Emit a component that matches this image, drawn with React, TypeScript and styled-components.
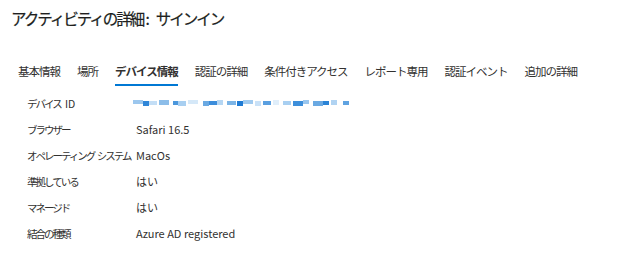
import React from 'react';
import styled, { createGlobalStyle } from 'styled-components';

const GlobalStyle = createGlobalStyle`
  html, body {
    margin: 0;
    padding: 0;
    background: #ffffff;
  }
  body {
    font-family: "Noto Sans CJK JP", "Noto Sans", sans-serif;
    color: #323130;
  }
`;

const SPage = styled.div`
  width: 620px;
  height: 259px;
  padding: 4px 11px 0 11px;
  box-sizing: border-box;
`;

const STitle = styled.h1`
  margin: 0;
  font-size: 15.5px;
  font-weight: 400;
  line-height: 28px;
  color: #201f1e;
  letter-spacing: -2px;
  -webkit-text-stroke: 0.2px #201f1e;
`;

const STitleColon = styled.span`
  letter-spacing: 0;
  margin: 0 6px 0 2px;
`;

const STabs = styled.div`
  display: flex;
  gap: 17px;
  margin-top: 30px;
  padding-left: 7px;
`;

const STab = styled.div<{ $active?: boolean }>`
  font-size: 11.5px;
  line-height: 18px;
  padding-bottom: 4px;
  letter-spacing: -1px;
  color: #323130;
  font-weight: ${(p) => (p.$active ? 700 : 400)};
  border-bottom: 2px solid ${(p) => (p.$active ? '#0078d4' : 'transparent')};
  white-space: nowrap;
`;

const SList = styled.div`
  display: flex;
  flex-direction: column;
  margin-top: 4px;
  padding-left: 16px;
`;

const SRow = styled.div`
  display: grid;
  grid-template-columns: 109px 1fr;
  align-items: center;
  height: 26px;
  color: #323130;
`;

const SLabel = styled.span`
  font-size: 10.5px;
  letter-spacing: -2px;
  word-spacing: 2px;
  white-space: nowrap;
`;

const SLatin = styled.span`
  letter-spacing: 0;
  margin-left: 2px;
`;

const SValue = styled.span`
  font-size: 11px;
  white-space: nowrap;
`;

const blur: [number, number, string][] = [
  [0, 10, '#9cc7ee'], [10, 6, '#2f86d8'], [16, 8, '#c3def6'], [26, 10, '#8cbde9'],
  [40, 5, '#4b97dc'], [45, 8, '#a8cff1'], [55, 10, '#d5e8f8'], [70, 6, '#6aa9e2'],
  [76, 8, '#3b8ddb'], [84, 6, '#b5d6f3'], [94, 9, '#7bb4e6'], [104, 6, '#1f7bd4'],
  [110, 10, '#a0caef'], [122, 6, '#c9e1f7'], [130, 8, '#5a9fe0'], [140, 6, '#e0eefa'],
  [150, 8, '#a8cff1'], [160, 10, '#3d8fdb'], [170, 6, '#9ac6ee'], [180, 10, '#6aa9e2'],
  [190, 6, '#2a84d7'], [198, 6, '#b0d3f2'], [210, 6, '#5fa3e1'],
];

const DeviceId = () => (
  <svg width="216" height="8" viewBox="0 0 216 8" style={{ display: 'block', marginLeft: -3 }}>
    {blur.map(([x, w, c], i) => (
      <rect key={i} x={x} y={i % 3 === 0 ? 1 : 2} width={w} height={i % 2 ? 5 : 4} fill={c} />
    ))}
  </svg>
);

const tabs = ['基本情報', '場所', 'デバイス情報', '認証の詳細', '条件付きアクセス', 'レポート専用', '認証イベント', '追加の詳細'];

const rows: [string, React.ReactNode][] = [
  ['デバイス ID', <DeviceId />],
  ['ブラウザー', 'Safari 16.5'],
  ['オペレーティング システム', 'MacOs'],
  ['準拠している', 'はい'],
  ['マネージド', 'はい'],
  ['結合の種類', 'Azure AD registered'],
];

// keep latin runs at normal spacing so "ID" doesn't collapse
const renderLabel = (label: string) =>
  label.split(/([A-Za-z0-9]+)/).map((part, i) =>
    /^[A-Za-z0-9]+$/.test(part) ? <SLatin key={i}>{part}</SLatin> : part
  );

const App = () => (
  <>
    <GlobalStyle />
    <SPage>
      <STitle>
        アクティビティの詳細<STitleColon>:</STitleColon>サインイン
      </STitle>
      <STabs>
        {tabs.map((t) => (
          <STab key={t} $active={t === 'デバイス情報'}>{t}</STab>
        ))}
      </STabs>
      <SList>
        {rows.map(([label, value]) => (
          <SRow key={label}>
            <SLabel>{renderLabel(label)}</SLabel>
            <SValue>{value}</SValue>
          </SRow>
        ))}
      </SList>
    </SPage>
  </>
);

export default App;
